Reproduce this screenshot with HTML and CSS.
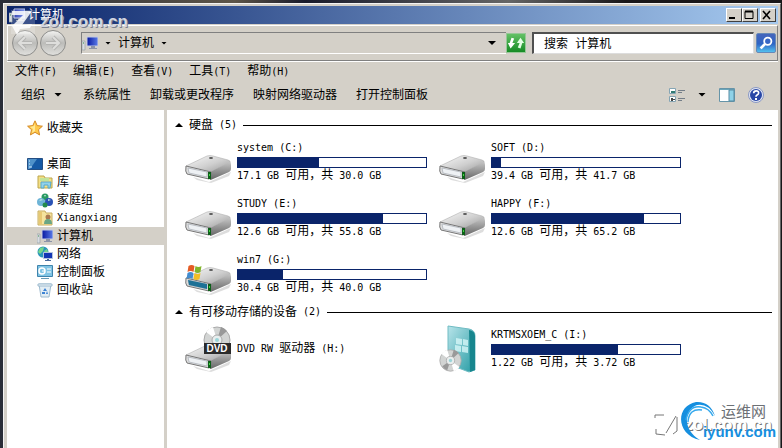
FILE: index.html
```html
<!DOCTYPE html>
<html lang="zh-CN">
<head>
    <meta charset="UTF-8">
    <meta name="viewport" content="width=device-width, initial-scale=1.0">
    <title>计算机</title>
    <link rel="stylesheet" href="styles.css">
</head>
<body>
    <!-- Iconos compartidos -->
    <svg class="defs" aria-hidden="true">
        <defs>
            <linearGradient id="metal" x1="0" y1="0" x2="1" y2="1">
                <stop offset="0" stop-color="#fafafa"/><stop offset=".55" stop-color="#cfcfcf"/><stop offset="1" stop-color="#999"/>
            </linearGradient>
            <linearGradient id="side" x1="0" y1="0" x2="0" y2="1">
                <stop offset="0" stop-color="#c4c4c4"/><stop offset="1" stop-color="#666"/>
            </linearGradient>
            <linearGradient id="blue" x1="0" y1="0" x2="1" y2="0">
                <stop offset="0" stop-color="#0718a0"/><stop offset="1" stop-color="#5b7ce8"/>
            </linearGradient>
            <linearGradient id="teal" x1="0" y1="0" x2="1" y2="1">
                <stop offset="0" stop-color="#b8e4ea"/><stop offset="1" stop-color="#259ba3"/>
            </linearGradient>
            <symbol id="computer" viewBox="0 0 16 16">
                <path d="M0 6h3v9H0z" fill="#d9dde2" stroke="#98a0a8" stroke-width=".7"/>
                <path d="M1 8h1" stroke="#3b8b45"/>
                <path d="M5 2h11v9H5z" fill="url(#blue)" stroke="#c4cbe2"/>
                <path d="M9 11h4v2H9zM7 13h8v1H7z" fill="#8c94a8"/>
            </symbol>
            <symbol id="drive" viewBox="0 0 48 28">
                <path d="M8 22l16 5 22-10-2 4-18 7-14-3z" fill="#bbb" opacity=".5"/>
                <path d="M1 11L22 1q3-1 6 0l15 4q3 1 2 3L25 17 4 13q-2 0-3-2z" fill="url(#metal)" stroke="#b0b0b0" stroke-width=".6"/>
                <path d="M25 17L45 7q1 1 1 3v4q0 2-2 3L28 24q-2 1-3 1z" fill="url(#side)"/>
                <path d="M1 11q-1 6 1 8l22 5q2 0 2-7z" fill="#dedede" stroke="#777"/>
                <path d="M3 13l19 4v5L4 18z" fill="#eef1f4" stroke="#aeb4bb" stroke-width=".8"/>
                <path d="M23 17h3v7h-3z" fill="#0d6019"/><path d="M24 19h1v2h-1z" fill="#41d63e"/>
                <ellipse cx="26" cy="3" rx="2" ry="1" fill="#555"/>
            </symbol>
            <symbol id="flag" viewBox="0 0 16 16">
                <path d="M2 2q3-2 6 0L7 8q-3-2-6 0z" fill="#e45b25"/>
                <path d="M9 2q3 2 6 0l-1 6q-3 2-6 0z" fill="#82b52c"/>
                <path d="M1 9q3-2 6 0l-1 6q-3-2-6 0z" fill="#438ccf"/>
                <path d="M8 9q3 2 6 0l-1 6q-3 2-6 0z" fill="#f2bd25"/>
            </symbol>
            <symbol id="disc" viewBox="0 0 28 28">
                <circle cx="14" cy="14" r="13" fill="#d2d4d3" stroke="#aaa"/>
                <path d="M14 14L3 6a13 13 0 0 1 7-5zM14 14l11 8a13 13 0 0 1-7 5z" fill="#fff"/>
                <path d="M14 14L18 1a13 13 0 0 1 6 4zM14 14l-4 12a13 13 0 0 1-6-5z" fill="#999"/>
                <circle cx="14" cy="14" r="5" fill="#e9eeee" stroke="#aaa"/>
                <circle cx="14" cy="14" r="2" fill="#9bd5d9"/>
            </symbol>
        </defs>
    </svg>

    <div class="window">
        <header class="titlebar">
            <svg class="ico"><use href="#computer"/></svg>
            <h1>计算机</h1>
            <div class="win-buttons">
                <button type="button" aria-label="最小化"><svg viewBox="0 0 12 10"><path d="M2 8h6" stroke="#000" stroke-width="2"/></svg></button>
                <button type="button" aria-label="最大化"><svg viewBox="0 0 12 10"><path d="M2 1.5h8v7H2z" fill="none" stroke="#000"/><path d="M2 1.5h8" stroke="#000" stroke-width="2"/></svg></button>
                <button type="button" class="close" aria-label="关闭"><svg viewBox="0 0 12 10"><path d="M2 1l7 8M9 1L2 9" stroke="#000" stroke-width="1.6"/></svg></button>
            </div>
        </header>

        <!-- Barra de navegación -->
        <div class="navbar">
            <button type="button" class="round" aria-label="后退"><svg viewBox="0 0 24 24"><path d="M19 12H6m6-6l-6 6 6 6" fill="none" stroke="#b4b4b2" stroke-width="4"/><path d="M19 12H6m6-6l-6 6 6 6" fill="none" stroke="#dededc" stroke-width="2"/></svg></button>
            <button type="button" class="round" aria-label="前进"><svg viewBox="0 0 24 24"><path d="M5 12h13m-6-6l6 6-6 6" fill="none" stroke="#b4b4b2" stroke-width="4"/><path d="M5 12h13m-6-6l6 6-6 6" fill="none" stroke="#dededc" stroke-width="2"/></svg></button>
            <div class="address">
                <svg class="ico"><use href="#computer"/></svg>
                <i class="down small"></i>
                <a href="#">计算机</a>
                <i class="down small"></i>
                <button type="button" class="history" aria-label="以前的位置"><i class="down"></i></button>
            </div>
            <button type="button" class="refresh" aria-label="刷新"><svg viewBox="0 0 20 18"><path d="M5 3l3 1-2 5h3l-5 6-3-6h2z" fill="#fff"/><path d="M15 15l-3-1 2-5h-3l4-6 4 6h-2z" fill="#e4ffe4"/></svg></button>
            <input type="text" class="search" placeholder="搜索 计算机" aria-label="搜索 计算机">
            <button type="button" class="go" aria-label="搜索"><svg viewBox="0 0 20 20"><path d="M9 11l-5 5" stroke="#fff" stroke-width="3"/><circle cx="12" cy="8" r="4" fill="#3867c5" stroke="#fff" stroke-width="2"/></svg></button>
        </div>

        <nav class="menu">
            <a href="#">文件<span class="en">(F)</span></a>
            <a href="#">编辑<span class="en">(E)</span></a>
            <a href="#">查看<span class="en">(V)</span></a>
            <a href="#">工具<span class="en">(T)</span></a>
            <a href="#">帮助<span class="en">(H)</span></a>
        </nav>

        <div class="toolbar">
            <button type="button" class="organize">组织<i class="down"></i></button>
            <button type="button">系统属性</button>
            <button type="button">卸载或更改程序</button>
            <button type="button">映射网络驱动器</button>
            <button type="button">打开控制面板</button>
            <div class="tools">
                <button type="button" aria-label="更改视图"><svg class="ico" viewBox="0 0 16 16"><path d="M.5 1.5h6v5h-6zM.5 9.500h6v5h-6z" fill="#fff" stroke="#85a5b4"/><path d="M2 4h4v2H2z" fill="#327b73"/><path d="M2 11h2v3H2zM4 12h2v1H4z" fill="#444"/><path d="M9 3.500h7M9 5.500h4M9 11.500h7M9 13.500h4" stroke="#747e88"/></svg></button>
                <button type="button" aria-label="更多选项"><i class="down"></i></button>
                <button type="button" aria-label="预览窗格"><svg class="ico" viewBox="0 0 16 16"><path d="M.5 1.5h15v13H.5z" fill="#fff" stroke="#6694a8"/><path d="M1 2h14v1H1z" fill="#6ba6bb"/><path d="M10 3h5v11h-5z" fill="#8ed2e8" stroke="#598ba2"/></svg></button>
                <button type="button" aria-label="帮助"><svg class="ico" viewBox="0 0 16 16"><circle cx="8" cy="8" r="7.5" fill="#e3e7f3" stroke="#8998c4"/><circle cx="8" cy="8" r="6" fill="#2947a6"/><path d="M5.7 6.2q0-2.4 2.5-2.4t2.4 2.1q0 1.2-1.5 2Q8 8.500 8 9.700" fill="none" stroke="#fff" stroke-width="1.700"/><path d="M7 11h2v2H7z" fill="#fff"/></svg></button>
            </div>
        </div>

        <div class="content">
            <!-- Panel lateral -->
            <aside class="sidebar">
                <a href="#" class="favorites"><svg class="ico" viewBox="0 0 16 16"><path d="M8 .8l2.200 4.800 5.200.6-3.900 3.500 1.100 5.200L8 12.300l-4.600 2.600 1.100-5.200L.6 6.200l5.200-.6z" fill="#ffc94b" stroke="#d48a27"/><path d="M8 3v8l-3 2 1-4-3-2 4-1z" fill="#ffe995"/></svg>收藏夹</a>
                <a href="#"><svg class="ico" viewBox="0 0 16 16"><path d="M.5 2.500h15v11H.5z" fill="#1559a5" stroke="#244e83"/><path d="M1 3h9L3 13H1z" fill="#4f91c9"/><path d="M2 5h1M2 8h1M2 11h3" stroke="#d9efff"/></svg>桌面</a>
                <a href="#" class="sub"><svg class="ico" viewBox="0 0 16 16"><path d="M1 2h6l1 2h7v10H1z" fill="#f4df85" stroke="#bda64d"/><path d="M3 4h9v3H3z" fill="#c2e39a"/><path d="M4 8h10l-1 6h-2v-3H7v3H4z" fill="#91d2ec" stroke="#56a9cb"/></svg>库</a>
                <a href="#" class="sub"><svg class="ico" viewBox="0 0 16 16"><circle cx="8" cy="5" r="3.500" fill="#2b9b64"/><circle cx="4" cy="10" r="4" fill="#6eb4d7"/><circle cx="12" cy="10" r="4" fill="#2a52b5"/><circle cx="8" cy="13" r="2.500" fill="#258b4c"/><path d="M2 9l2-2 2 1zM11 7l3 1-3 1zM7 3l2 0-1 2z" fill="#c2ead6"/></svg>家庭组</a>
                <a href="#" class="sub"><svg class="ico" viewBox="0 0 16 16"><path d="M1 1h7l1 2h6v12H1z" fill="#f5e39d" stroke="#c8ad60"/><path d="M2 2h3v12H2z" fill="#e7c873"/><circle cx="11" cy="7" r="2.500" fill="#a97850"/><path d="M7 14q0-5 4-5t4 5z" fill="#6aa685"/></svg><span class="en">Xiangxiang</span></a>
                <a href="#" class="sub active"><svg class="ico"><use href="#computer"/></svg>计算机</a>
                <a href="#" class="sub"><svg class="ico" viewBox="0 0 16 16"><circle cx="6" cy="6" r="5.500" fill="#2a96ba"/><path d="M3 2l4-1-1 4-3 3-2-2zM7 5l3-2 1 3-3 3z" fill="#76d68b"/><path d="M6.500 6.500h9v6h-9z" fill="#1436b4" stroke="#b5c3dc"/><path d="M10 13h2v1h2v1H8v-1h2z" fill="#476899"/></svg>网络</a>
                <a href="#" class="sub"><svg class="ico" viewBox="0 0 16 16"><path d="M.5 1.500h15v11H.5z" fill="#80c4e4" stroke="#3f84ad"/><circle cx="5" cy="7" r="3" fill="none" stroke="#fff" stroke-width="1.500"/><path d="M5 7h3M10 5h4M10 8h4" stroke="#fff"/><path d="M4 14h8v1H4z" fill="#679ab5"/></svg>控制面板</a>
                <a href="#" class="sub"><svg class="ico" viewBox="0 0 16 16"><path d="M2 2h12l-2 13H4z" fill="#e2edf4" stroke="#9dbace"/><path d="M1 2h14v2H1z" fill="#f1f7fa" stroke="#9dbace"/><path d="M8 6l2 3H6zM5 10h3v2H5zM10 9l1 3H9z" fill="#3d83d4"/></svg>回收站</a>
            </aside>

            <main>
                <section class="group">
                    <h2><i class="up"></i>硬盘 <span class="en">(5)</span></h2>
                    <div class="tiles">
                        <article class="tile">
                            <svg class="drive"><use href="#drive"/></svg>
                            <div class="info">
                                <h3 class="en">system (C:)</h3>
                                <div class="bar"><div style="width: 43%"></div></div>
                                <p class="en">17.1 GB <span>可用，共</span> 30.0 GB</p>
                            </div>
                        </article>
                        <article class="tile">
                            <svg class="drive"><use href="#drive"/></svg>
                            <div class="info">
                                <h3 class="en">SOFT (D:)</h3>
                                <div class="bar"><div style="width: 5%"></div></div>
                                <p class="en">39.4 GB <span>可用，共</span> 41.7 GB</p>
                            </div>
                        </article>
                        <article class="tile">
                            <svg class="drive"><use href="#drive"/></svg>
                            <div class="info">
                                <h3 class="en">STUDY (E:)</h3>
                                <div class="bar"><div style="width: 77%"></div></div>
                                <p class="en">12.6 GB <span>可用，共</span> 55.8 GB</p>
                            </div>
                        </article>
                        <article class="tile">
                            <svg class="drive"><use href="#drive"/></svg>
                            <div class="info">
                                <h3 class="en">HAPPY (F:)</h3>
                                <div class="bar"><div style="width: 81%"></div></div>
                                <p class="en">12.6 GB <span>可用，共</span> 65.2 GB</p>
                            </div>
                        </article>
                        <article class="tile">
                            <svg class="drive" viewBox="0 0 48 28"><use href="#drive" width="48" height="28"/><path d="M3 13l19 4v5L4 18z" fill="#1d7196"/><use href="#flag" x="1" y="-3" width="17" height="16"/></svg>
                            <div class="info">
                                <h3 class="en">win7 (G:)</h3>
                                <div class="bar"><div style="width: 24%"></div></div>
                                <p class="en">30.4 GB <span>可用，共</span> 40.0 GB</p>
                            </div>
                        </article>
                    </div>
                </section>

                <section class="group">
                    <h2><i class="up"></i>有可移动存储的设备 <span class="en">(2)</span></h2>
                    <div class="tiles">
                        <article class="tile device">
                            <svg class="big" viewBox="0 0 48 48"><use href="#drive" y="19" width="48" height="28"/><use href="#disc" x="18" y="1" width="28" height="28"/><path d="M19 18h27v11H19z" fill="#2b2b2b"/><text x="32" y="27" text-anchor="middle">DVD</text></svg>
                            <h3 class="en">DVD RW <span>驱动器</span> (H:)</h3>
                        </article>
                        <article class="tile">
                            <svg class="big" viewBox="0 0 48 48"><path d="M9 1l21 3q6 1 6 7v34l-6 2-21-8z" fill="url(#teal)" stroke="#70bcc3"/><path d="M30 5q6 1 6 6v34l-5 2z" fill="#17868e"/><path d="M17 13l6 1v6l-6-1zM24 14l5 1v6l-5-1zM16 20l6 1v6l-6-1zM23 21l6 1v6l-6-1z" fill="#d6f6f8" opacity=".8"/><use href="#disc" x="0" y="24" width="23" height="23"/></svg>
                            <div class="info">
                                <h3 class="en">KRTMSXOEM_C (I:)</h3>
                                <div class="bar"><div style="width: 67%"></div></div>
                                <p class="en">1.22 GB <span>可用，共</span> 3.72 GB</p>
                            </div>
                        </article>
                    </div>
                </section>
            </main>
        </div>
    </div>

    <!-- Marcas de agua -->
    <div class="mark mark-top">
        <svg viewBox="0 0 26 26"><path d="M2 2h20L12 16l10-1-2 4-10 1-3 6-5-9L13 6H2z" fill="#fff" opacity=".85"/><path d="M1 1h24v24H1z" fill="#fff" opacity=".2"/></svg>
        <span>zol.com.cn</span>
    </div>
    <div class="mark mark-bottom">
        <svg viewBox="0 0 26 26"><path d="M1 6V3h9M2 17v5l9 1M12 21L22 4M19 22l4-3V5" fill="none" stroke="#777"/></svg>
        <span>zol.com.cn</span>
    </div>
    <div class="brand">
        <svg viewBox="0 0 40 42"><path d="M21 40C-3 35-4 6 17 2q14-1 19 14Q29 3 18 5C4 10 4 30 21 40z" fill="#168fdf"/><path d="M7 20Q10 5 22 7q8 1 12 9M9 22q1-14 14-12" fill="none" stroke="#35a9ed" stroke-width="1.500"/></svg>
        <div><b>运维网</b><strong>iyunv.com</strong></div>
    </div>
</body>
</html>
```
FILE: styles.css
```css
/* Estilos globales */
* {
    box-sizing: border-box;
}

body {
    margin: 0;
    padding: 3px 1px 0 3px;
    min-height: 100vh;
    display: flex;
    position: relative;
    background: linear-gradient(90deg, #292d38, #5d5548 30%, #191b2b 39%, #666 65%, #191719 80%);
    font-family: "DejaVu Sans Mono", "Noto Sans CJK SC", monospace;
    font-size: 12px;
    line-height: 18px;
    color: #000;
    overflow: hidden;
}

.defs {
    position: absolute;
    width: 0;
    height: 0;
}

h1, h2, h3, p {
    margin: 0;
    font-size: 12px;
    font-weight: normal;
}

a {
    color: inherit;
    text-decoration: none;
}

button {
    padding: 0;
    border: none;
    background: none;
    color: inherit;
    font: inherit;
}

svg {
    display: block;
    flex: none;
}

.ico {
    width: 16px;
    height: 16px;
}

/* Texto latino, mitad de ancho */
.en {
    font-size: 10px;
}

.en span {
    font-size: 12px;
}

/* Flechas */
.down, .up {
    display: block;
    flex: none;
    width: 8px;
    height: 4px;
    background: #000;
    clip-path: polygon(0 0, 100% 0, 50% 100%);
}

.down.small {
    width: 6px;
    height: 3px;
}

.up {
    clip-path: polygon(50% 0, 100% 100%, 0 100%);
}

/* Ventana */
.window {
    flex: 1;
    display: flex;
    flex-direction: column;
    min-width: 0;
    padding: 2px 2px 0 3px;
    border: 1px solid #f4f4f4;
    border-right-color: #666;
    border-bottom: none;
    background: #d4d0c8;
}

.titlebar {
    display: flex;
    align-items: center;
    gap: 3px;
    height: 18px;
    padding: 0 2px;
    background: linear-gradient(90deg, #0a246a, #a6caf0);
    color: #fff;
}

.win-buttons {
    display: flex;
    margin-left: auto;
}

.win-buttons button {
    width: 16px;
    height: 14px;
    border: 1px solid #fff;
    border-right-color: #404040;
    border-bottom-color: #404040;
    background: #d4d0c8;
}

.win-buttons svg {
    width: 12px;
    height: 10px;
}

.win-buttons .close {
    margin-left: 2px;
}

/* Barra de navegación */
.navbar {
    display: flex;
    align-items: center;
    height: 36px;
    margin-top: 1px;
    padding: 0 1px 0 4px;
    border: 1px solid #808080;
    border-top-color: #fff;
    border-left-color: #fff;
    box-shadow: 0 1px #fff;
}

.round {
    width: 26px;
    height: 26px;
    margin-right: 2px;
    border: 1px solid #8d8d8b;
    border-radius: 50%;
    background: linear-gradient(#f1f1ef, #bcbcb9 50%, #e0e0dd);
}

.address {
    flex: 1;
    display: flex;
    align-items: center;
    gap: 7px;
    height: 22px;
    margin-left: 13px;
    border: 1px solid #808080;
    border-right: none;
    border-bottom-color: #fff;
}

.history {
    margin-left: auto;
    padding: 4px 10px;
}

.refresh {
    width: 20px;
    height: 20px;
    border: 1px solid #96c796;
    background: linear-gradient(#64c165, #168b25);
}

.search {
    width: 222px;
    height: 22px;
    margin: 0 2px 0 6px;
    padding: 0 10px;
    border: 2px solid #505050;
    border-right: 1px solid #ddd;
    border-bottom: 1px solid #ddd;
    background: #fff;
    font: inherit;
}

.search::placeholder {
    color: #000;
    opacity: 1;
}

.go {
    width: 20px;
    height: 20px;
    border: 1px solid #6588b8;
    border-radius: 2px;
    background: linear-gradient(#4565bb, #2e65c5 55%, #52c0ee);
}

/* Menú y barra de herramientas */
.menu {
    display: flex;
    gap: 16px;
    padding: 1px 8px 0;
    height: 20px;
}

.toolbar {
    display: flex;
    align-items: center;
    gap: 19px;
    height: 29px;
    padding: 0 14px 2px;
    white-space: nowrap;
}

.organize {
    display: flex;
    align-items: center;
    gap: 9px;
    margin-right: 2px;
}

.tools {
    display: flex;
    align-items: center;
    gap: 13px;
    margin-left: auto;
}

/* Panel lateral */
.content {
    flex: 1;
    display: flex;
    background: #fff;
}

.sidebar {
    flex: none;
    width: 160px;
    padding-top: 9px;
    border-right: 3px solid #d4d0c8;
}

.sidebar a {
    display: flex;
    align-items: center;
    gap: 4px;
    height: 18px;
    padding-left: 20px;
}

.sidebar .favorites {
    margin-bottom: 18px;
}

.sidebar .sub {
    padding-left: 30px;
}

.sidebar .active {
    background: #d4d0c8;
}

/* Unidades */
main {
    flex: 1;
    min-width: 0;
    padding: 7px 6px 0 8px;
}

.group {
    margin-bottom: 9px;
}

.group h2 {
    display: flex;
    align-items: center;
    gap: 6px;
    height: 16px;
    margin-bottom: 5px;
}

.group h2::after {
    content: "";
    flex: 1;
    height: 1px;
    background: #000;
}

.tiles {
    display: grid;
    grid-template-columns: repeat(auto-fill, 254px);
    grid-auto-rows: 44px;
    row-gap: 12px;
    padding-left: 10px;
}

.group .tiles {
    padding-bottom: 1px;
}

.tile {
    display: flex;
    gap: 4px;
}

.drive {
    width: 48px;
    height: 28px;
    margin-top: 17px;
    overflow: visible;
}

.big {
    width: 48px;
    height: 48px;
}

.big text {
    fill: #fff;
    font: bold 10px "Liberation Sans", sans-serif;
}

.info {
    width: 190px;
    padding-top: 3px;
}

.tile h3, .tile p {
    height: 14px;
    line-height: 14px;
    white-space: nowrap;
}

.device h3 {
    margin-top: 16px;
}

.bar {
    height: 11px;
    margin-top: 2px;
    border: 1px solid #0a246a;
    background: #fff;
}

.bar div {
    height: 100%;
    background: #0a246a;
}

/* Marcas de agua */
.mark {
    position: absolute;
    display: flex;
    align-items: center;
    gap: 4px;
    font: bold 17px "Liberation Sans", sans-serif;
}

.mark svg {
    width: 26px;
    height: 26px;
}

.mark-top {
    left: 10px;
    top: 9px;
    color: #d2d6e0;
    text-shadow: 1px 1px #7d8290;
}

.mark-bottom {
    right: 10px;
    bottom: 10px;
    color: #fff;
    text-shadow: 1px 1px #777;
}

.brand {
    position: absolute;
    right: 6px;
    bottom: 6px;
    display: flex;
}

.brand svg {
    width: 40px;
    height: 42px;
    margin-right: -16px;
}

.brand div {
    display: flex;
    flex-direction: column;
    font-family: "Liberation Sans", "Noto Sans CJK SC", sans-serif;
}

.brand b {
    padding-left: 18px;
    color: #6c7075;
    font-size: 15px;
    font-weight: normal;
    line-height: 24px;
}

.brand strong {
    color: #168fdf;
    font-size: 15px;
    line-height: 16px;
}
```
